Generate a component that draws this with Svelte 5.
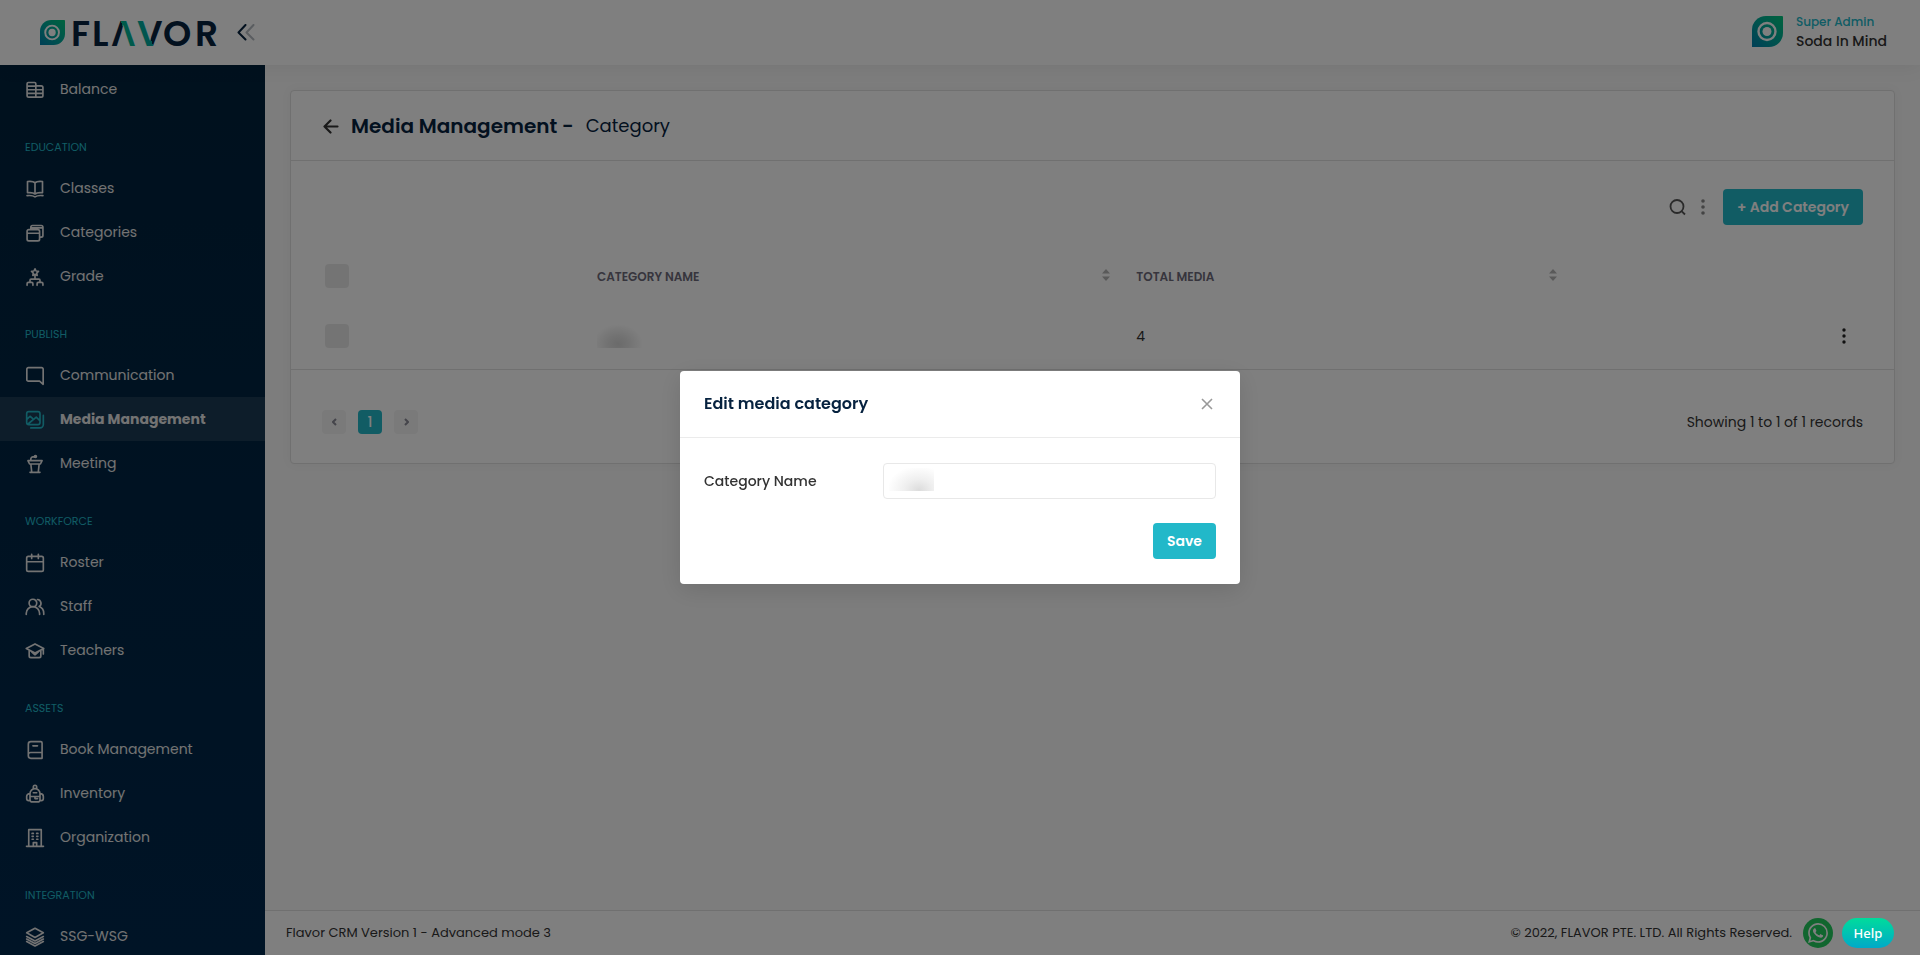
<script>
  const groups = [
    { label: '', items: [{ name: 'Balance', icon: 'balance' }] },
    {
      label: 'EDUCATION',
      items: [
        { name: 'Classes', icon: 'classes' },
        { name: 'Categories', icon: 'categories' },
        { name: 'Grade', icon: 'grade' }
      ]
    },
    {
      label: 'PUBLISH',
      items: [
        { name: 'Communication', icon: 'chat' },
        { name: 'Media Management', icon: 'media', active: true },
        { name: 'Meeting', icon: 'meeting' }
      ]
    },
    {
      label: 'WORKFORCE',
      items: [
        { name: 'Roster', icon: 'roster' },
        { name: 'Staff', icon: 'staff' },
        { name: 'Teachers', icon: 'teachers' }
      ]
    },
    {
      label: 'ASSETS',
      items: [
        { name: 'Book Management', icon: 'book' },
        { name: 'Inventory', icon: 'inventory' },
        { name: 'Organization', icon: 'organization' }
      ]
    },
    { label: 'INTEGRATION', items: [{ name: 'SSG-WSG', icon: 'layers' }] }
  ];

  // Outline icons on a 24-unit grid
  const icons = {
    balance:
      'M13 20.5H4.500a2 2 0 0 1-2-2V4.500a1.500 1.500 0 0 1 1.500-1.500h7.500a1.500 1.500 0 0 1 1.500 1.500V20.500zM13 7h6.500a2 2 0 0 1 2 2v9.500a2 2 0 0 1-2 2H13M2.500 7.300H13M2.500 11.700h19M2.500 16.100h19',
    classes:
      'M12 4.500C10 2.800 6.500 2.600 3 3v13.500c3.500-.4 7-.2 9 1.500 2-1.700 5.500-1.900 9-1.500V3c-3.500-.4-7-.2-9 1.500zM12 4.500v12.500M2.500 20c3.500-.4 7-.2 9.500 1.500 2.500-1.700 6-1.900 9.500-1.500',
    categories:
      'M4.500 8h11a2 2 0 0 1 2 2v9.500a2 2 0 0 1-2 2h-11a2 2 0 0 1-2-2V10a2 2 0 0 1 2-2zM2.500 12.300h15M7 7.500V5a2 2 0 0 1 2-2h10.500a2 2 0 0 1 2 2v10a2 2 0 0 1-2 2h-2M7 5.800h14.500',
    grade:
      'M12 2.200l1.300 2.600 2.900.4-2.100 2 .5 2.900-2.600-1.400-2.600 1.400.5-2.900-2.100-2 2.900-.4zM12 10v4.500M6 18.500v-2.700a1.300 1.300 0 0 1 1.300-1.300h9.400a1.300 1.300 0 0 1 1.300 1.300v2.700M2.500 22v-2a1.500 1.500 0 0 1 1.500-1.500h4A1.500 1.500 0 0 1 9.500 20v2M14.500 22v-2a1.500 1.500 0 0 1 1.500-1.500h4a1.500 1.500 0 0 1 1.500 1.500v2',
    chat: 'M4 2h16a1.800 1.800 0 0 1 1.800 1.800v18.200l-4.300-3.800H4a1.800 1.800 0 0 1-1.800-1.800V3.800A1.800 1.800 0 0 1 4 2z',
    media:
      'M4.500 2h11a2.500 2.500 0 0 1 2.500 2.500v10.500a2.500 2.500 0 0 1-2.500 2.500h-11A2.500 2.500 0 0 1 2 15V4.500A2.500 2.500 0 0 1 4.500 2zM2.500 11l3.500-3.500L9 10M4 16.500L13.500 8.500l4 4M22 6.500v11a4 4 0 0 1-4 4H7',
    meeting:
      'M3.500 8h17l-2 4h-13zM7 12l1 9M17 12l-1 9M6 22h12M7 8V6a2.500 2.500 0 0 1 2.500-2.500H12',
    roster:
      'M4 4h16a2 2 0 0 1 2 2v14a2 2 0 0 1-2 2H4a2 2 0 0 1-2-2V6a2 2 0 0 1 2-2zM2 10.500h20M8 1.500v5M16 1.500v5',
    staff:
      'M9.500 2.700a4.600 4.600 0 1 1 0 9.200 4.600 4.600 0 0 1 0-9.200zM1.500 21v-1.500a8 8 0 0 1 16 0V21M15 3a4.600 4.600 0 0 1 2 8.500c3.300 1.300 5.500 4.200 5.500 8V21',
    teachers:
      'M12 3.500l10.500 5.500-10.500 5.500L1.500 9zM5 11.500v6.500a2 2 0 0 0 2 2h10a2 2 0 0 0 2-2v-6.500M22 9.500v6M8 13l4 3.500 4-3.500',
    book: 'M7 2h12a1.500 1.500 0 0 1 1.500 1.500v18.500H7a3 3 0 0 1-3-3V5a3 3 0 0 1 3-3zM4 17a3 3 0 0 1 3-2h13.500M9.500 7h5.500',
    inventory:
      'M12 5.500a6 6 0 0 1 6 6V19a2.500 2.500 0 0 1-2.500 2.500h-7A2.500 2.500 0 0 1 6 19v-7.500a6 6 0 0 1 6-6zM10 5.500V3.500a2 2 0 0 1 4 0v2M6 11.500c-2.300 0-4 1.500-4 3.500v2.500A2.500 2.500 0 0 0 4.500 20H6M18 11.500c2.300 0 4 1.500 4 3.500v2.500a2.500 2.500 0 0 1-2.500 2.500H18M10 10.500h4M6.500 15h11M12 15v2.500h3',
    organization:
      'M4.500 22V2h15v20M1.800 22h20.400M10 22v-4.500h4v4.500M8.500 6.500h1.500M14 6.500h1.500M8.500 10h1.500M14 10h1.500M8.500 13.500h1.500M14 13.500h1.500',
    layers:
      'M12 1.500l10 5.500-10 5.500-10-5.500zM2 11.400l10 5.300 10-5.300M2 14.400l10 5.300 10-5.300M2 17.400l10 5.300 10-5.300'
  };

  let open = $state(true);
  let name = $state('');
</script>

{#snippet mark(id)}
  <svg class="mark" viewBox="0 0 31 31" aria-hidden="true">
    <defs>
      <linearGradient {id} x1="0" y1="1" x2="1" y2="0">
        <stop offset="0" stop-color="#007fae" />
        <stop offset="0.5" stop-color="#00a89b" />
        <stop offset="1" stop-color="#00c77c" />
      </linearGradient>
    </defs>
    <path d="M0 31V14A14 14 0 0 1 14 0H30a1 1 0 0 1 1 1V17A14 14 0 0 1 17 31z" fill="url(#{id})" />
    <circle cx="15" cy="15.500" r="8.500" fill="none" stroke="#fff" stroke-width="2.400" />
    <circle cx="15" cy="15.500" r="4.500" fill="#fff" />
  </svg>
{/snippet}

<div class="page">
  <header class="topbar">
    <a class="brand" href="#home" aria-label="Flavor">
      {@render mark('brandMark')}
      <svg class="wordmark" viewBox="0 0 150 60" aria-hidden="true">
        <defs>
          <linearGradient id="lambda" gradientUnits="userSpaceOnUse" x1="50" y1="18" x2="75" y2="11">
            <stop offset="0" stop-color="#06223f" />
            <stop offset="0" stop-color="#00b894" />
            <stop offset="1" stop-color="#009fa8" />
          </linearGradient>
          <linearGradient id="vee" gradientUnits="userSpaceOnUse" x1="50" y1="25" x2="75" y2="18">
            <stop offset="0" stop-color="#00b894" />
            <stop offset="1" stop-color="#00a8a0" />
            <stop offset="1" stop-color="#06223f" />
          </linearGradient>
        </defs>
        <text x="0" y="43">F</text>
        <text x="21" y="43">L</text>
        <text class="greek" x="40" y="43" fill="url(#lambda)">Λ</text>
        <text x="66" y="43" fill="url(#vee)">V</text>
        <text x="92" y="43">O</text>
        <text x="124" y="43">R</text>
      </svg>
    </a>
    <button class="plain collapse" aria-label="Collapse menu">
      <svg width="18" height="17" viewBox="0 0 18 17" fill="none" stroke-width="2" stroke-linecap="round" stroke-linejoin="round">
        <path d="M8.500 1L1.500 8.500l7 7" stroke="#06223f" />
        <path d="M16.500 1L9.500 8.500l7 7" stroke="#b4bac0" />
      </svg>
    </button>
    <div class="user">
      {@render mark('userMark')}
      <div>
        <div class="role">Super Admin</div>
        <div class="who">Soda In Mind</div>
      </div>
    </div>
  </header>

  <div class="body">
    <nav class="sidebar">
      {#each groups as group}
        {#if group.label}<h2>{group.label}</h2>{/if}
        {#each group.items as item}
          <a href="#{item.icon}" class:active={item.active}>
            <svg width="20" height="20" viewBox="0 0 24 24" aria-hidden="true"><path d={icons[item.icon]} />
              {#if item.icon === 'meeting'}<circle cx="12.500" cy="3" r="1.200" />{/if}
            </svg>
            <span>{item.name}</span>
          </a>
        {/each}
      {/each}
    </nav>

    <div class="content">
      <main>
        <section class="card">
          <div class="card-head">
            <button class="plain" aria-label="Back">
              <svg width="16" height="16" viewBox="0 0 16 16" fill="none" stroke="#333" stroke-width="2.200" stroke-linecap="round" stroke-linejoin="round"><path d="M14.500 8.500H1.500M7.500 2.500l-6 6 6 6" /></svg>
            </button>
            <h1>Media Management -</h1>
            <span class="crumb">Category</span>
          </div>
          <div class="card-body">
            <div class="toolbar">
              <div class="tools">
                <button class="plain" aria-label="Search">
                  <svg width="17" height="17" viewBox="0 0 17 17" fill="none" stroke="#555" stroke-width="1.800"><circle cx="8" cy="7.500" r="6.500" /><path d="M12.800 12.300l3.200 3.200" /></svg>
                </button>
                <button class="plain" aria-label="More options">
                  <svg width="4" height="16" viewBox="0 0 4 16" fill="#888"><circle cx="2" cy="2" r="1.800" /><circle cx="2" cy="8" r="1.800" /><circle cx="2" cy="14" r="1.800" /></svg>
                </button>
              </div>
              <button class="primary">+ Add Category</button>
            </div>
            <table>
              <colgroup><col class="c1" /><col class="c2" /><col class="c3" /><col /></colgroup>
              <thead>
                <tr>
                  <th><input type="checkbox" aria-label="Select all" /></th>
                  {#each ['CATEGORY NAME', 'TOTAL MEDIA'] as head}
                    <th>
                      <div class="sortable">
                        <span>{head}</span>
                        <svg width="8" height="12" viewBox="0 0 8 12" fill="#b4b4b4" aria-hidden="true"><path d="M4 0l4 4.500H0zM4 12l4-4.500H0z" /></svg>
                      </div>
                    </th>
                  {/each}
                  <th></th>
                </tr>
              </thead>
              <tbody>
                <tr>
                  <td><input type="checkbox" aria-label="Select row" /></td>
                  <td><div class="smudge"></div></td>
                  <td>4</td>
                  <td>
                    <button class="plain row-menu" aria-label="Row actions">
                      <svg width="4" height="16" viewBox="0 0 4 16" fill="#222"><circle cx="2" cy="2" r="1.700" /><circle cx="2" cy="8" r="1.700" /><circle cx="2" cy="14" r="1.700" /></svg>
                    </button>
                  </td>
                </tr>
              </tbody>
            </table>
          </div>
          <div class="card-foot">
            <div class="pager">
              <button aria-label="Previous page"><svg width="5" height="8" viewBox="0 0 5 8"><path d="M4 1L1 4l3 3" /></svg></button>
              <button class="current">1</button>
              <button aria-label="Next page"><svg width="5" height="8" viewBox="0 0 5 8"><path d="M1 1l3 3-3 3" /></svg></button>
            </div>
            <span>Showing 1 to 1 of 1 records</span>
          </div>
        </section>
      </main>
      <footer>
        <span>Flavor CRM Version 1 - Advanced mode 3</span>
        <div class="legal">
          <span>© 2022, FLAVOR PTE. LTD. All Rights Reserved.</span>
          <a class="whatsapp" href="#whatsapp" aria-label="WhatsApp">
            <svg width="20" height="20" viewBox="0 0 24 24" fill="#fff" aria-hidden="true">
              <path d="M17.472 14.382c-.297-.149-1.758-.867-2.030-.967-.273-.099-.471-.148-.670.150-.197.297-.767.966-.940 1.164-.173.199-.347.223-.644.075-.297-.150-1.255-.463-2.390-1.475-.883-.788-1.480-1.761-1.653-2.059-.173-.297-.018-.458.130-.606.134-.133.298-.347.446-.520.149-.174.198-.298.298-.497.099-.198.050-.371-.025-.520-.075-.149-.669-1.612-.916-2.207-.242-.579-.487-.500-.669-.510-.173-.008-.371-.010-.570-.010-.198 0-.520.074-.792.372-.272.297-1.040 1.016-1.040 2.479 0 1.462 1.065 2.875 1.213 3.074.149.198 2.096 3.200 5.077 4.487.709.306 1.262.489 1.694.625.712.227 1.360.195 1.871.118.571-.085 1.758-.719 2.006-1.413.248-.694.248-1.289.173-1.413-.074-.124-.272-.198-.570-.347m-5.421 7.403h-.004a9.870 9.870 0 0 1-5.031-1.378l-.361-.214-3.741.982.998-3.648-.235-.374a9.860 9.860 0 0 1-1.510-5.260c.001-5.450 4.436-9.884 9.888-9.884 2.640 0 5.122 1.030 6.988 2.898a9.825 9.825 0 0 1 2.893 6.994c-.003 5.450-4.437 9.884-9.885 9.884m8.413-18.297A11.815 11.815 0 0 0 12.050 0C5.495 0 .160 5.335.157 11.892c0 2.096.547 4.142 1.588 5.945L.057 24l6.305-1.654a11.882 11.882 0 0 0 5.683 1.448h.005c6.554 0 11.890-5.335 11.893-11.893a11.821 11.821 0 0 0-3.480-8.413z" />
            </svg>
          </a>
        </div>
      </footer>
    </div>
  </div>
</div>

{#if open}
  <div class="overlay">
    <div class="modal" role="dialog" aria-modal="true" aria-labelledby="modal-title">
      <div class="modal-head">
        <h2 id="modal-title">Edit media category</h2>
        <button class="plain" aria-label="Close" onclick={() => (open = false)}>
          <svg width="18" height="12" viewBox="0 0 18 12" fill="none" stroke="#999" stroke-width="1.600"><path d="M4 1l10 10M14 1L4 11" /></svg>
        </button>
      </div>
      <form onsubmit={(e) => e.preventDefault()}>
        <div class="field">
          <label for="category-name">Category Name</label>
          <input id="category-name" type="text" bind:value={name} />
        </div>
        <button class="primary" type="submit">Save</button>
      </form>
    </div>
  </div>
{/if}

<button class="help">Help</button>

<style>
  :global(body) {
    font-family: Poppins, Inter, 'Noto Sans', sans-serif;
    font-size: 14px;
    line-height: 20px;
    color: #333;
  }
  :global(*) {
    box-sizing: border-box;
  }
  button,
  input {
    font: inherit;
  }
  h1,
  h2 {
    margin: 0;
  }
  a {
    color: inherit;
    text-decoration: none;
  }
  svg {
    display: block;
    flex: none;
  }
  .plain {
    display: flex;
    padding: 0;
    border: 0;
    background: none;
  }
  .page {
    display: flex;
    flex-direction: column;
    height: 100vh;
    overflow: hidden;
  }
  .topbar {
    display: flex;
    align-items: center;
    height: 65px;
    flex: none;
    padding: 0 33px 0 40px;
    background: #fff;
    box-shadow: 0 0 20px rgba(0, 0, 0, 0.08);
    z-index: 1;
  }
  .brand {
    display: flex;
    align-items: center;
    gap: 6px;
  }
  .brand .mark {
    width: 25px;
    height: 25px;
  }
  .wordmark {
    width: 150px;
    height: 60px;
    font-weight: 600;
    font-size: 36px;
    fill: #06223f;
  }
  .greek {
    font-family: Inter, sans-serif;
    font-size: 34px;
  }
  .collapse {
    margin-left: 16px;
  }
  .user {
    display: flex;
    align-items: center;
    gap: 13px;
    margin-left: auto;
    padding-bottom: 2px;
  }
  .user .mark {
    width: 31px;
    height: 31px;
  }
  .role {
    font-size: 12px;
    line-height: 18px;
    color: #22b8c9;
    font-weight: 500;
  }
  .who {
    font-weight: 500;
    color: #333;
  }
  .body {
    display: flex;
    flex: 1;
    min-height: 0;
  }
  .sidebar {
    flex: none;
    width: 265px;
    padding-top: 2px;
    overflow: hidden;
    color: #e6e6e6;
    background: linear-gradient(#00223c, #00284d);
  }
  .sidebar h2 {
    padding: 26px 25px 9px;
    font-size: 11px;
    line-height: 20px;
    font-weight: 400;
    color: #22b8c9;
  }
  .sidebar a {
    display: flex;
    align-items: center;
    gap: 15px;
    height: 44px;
    padding: 0 25px;
  }
  .sidebar svg {
    margin-top: 2px;
    fill: none;
    stroke: currentColor;
    stroke-width: 2;
    stroke-linecap: round;
    stroke-linejoin: round;
  }
  .sidebar a.active {
    background: #1a3a54;
    font-weight: 700;
  }
  .active svg {
    color: #22b8c9;
  }
  .content {
    flex: 1;
    min-width: 0;
    display: flex;
    flex-direction: column;
    background: #fafafa;
  }
  main {
    flex: 1;
    padding: 25px;
  }
  .card {
    background: #fff;
    border: 1px solid #e0e0e0;
    border-radius: 4px;
    box-shadow: 0 0 12px rgba(0, 0, 0, 0.04);
  }
  .card-head {
    display: flex;
    align-items: center;
    gap: 12px;
    height: 70px;
    padding: 0 32px;
    border-bottom: 1px solid #e0e0e0;
    color: #06223f;
  }
  h1 {
    font-size: 20px;
    line-height: 30px;
    font-weight: 600;
  }
  .crumb {
    font-size: 18px;
    font-weight: 400;
  }
  .card-body {
    padding: 28px 31px 4px;
    border-bottom: 1px solid #e0e0e0;
  }
  .toolbar {
    display: flex;
    justify-content: flex-end;
    align-items: center;
    gap: 18px;
    padding-bottom: 21px;
  }
  .tools {
    display: flex;
    align-items: center;
    gap: 15px;
  }
  .primary {
    height: 36px;
    padding: 0 14px;
    border: 0;
    border-radius: 4px;
    background: #22b8c9;
    color: #fff;
    font-weight: 600;
  }
  table {
    width: 100%;
    table-layout: fixed;
    border-collapse: collapse;
  }
  .c1 {
    width: 17%;
  }
  .c2 {
    width: 35%;
  }
  .c3 {
    width: 29%;
  }
  th,
  td {
    padding: 0 13px;
    text-align: left;
  }
  th {
    height: 60px;
    font-size: 12px;
    font-weight: 600;
    color: #6e6b7b;
  }
  td {
    height: 59px;
    vertical-align: middle;
  }
  th:first-child,
  td:first-child {
    padding: 0 3px;
  }
  .sortable {
    display: flex;
    justify-content: space-between;
    align-items: center;
  }
  .sortable span {
    padding-top: 2px;
  }
  .sortable svg {
    margin-bottom: 2px;
  }
  input[type='checkbox'] {
    display: block;
    appearance: none;
    width: 24px;
    height: 24px;
    margin: 0;
    border-radius: 4px;
    background: #e9e9e9;
  }
  .smudge {
    width: 48px;
    height: 24px;
    background: radial-gradient(ellipse 25px 20px at 21px 20px, #d6d6d6, #e4e4e4 40%, #fff);
  }
  .row-menu {
    margin-left: auto;
    padding: 0 4px;
  }
  .card-foot {
    display: flex;
    justify-content: space-between;
    align-items: center;
    height: 93px;
    padding: 10px 31px 0;
  }
  .pager {
    display: flex;
    gap: 12px;
  }
  .pager button {
    display: flex;
    align-items: center;
    justify-content: center;
    width: 24px;
    height: 24px;
    padding: 0;
    border: 0;
    border-radius: 4px;
    background: #f4f4f4;
    font-weight: 500;
  }
  .pager .current {
    background: #22b8c9;
    color: #fff;
  }
  .pager svg {
    fill: none;
    stroke: #8a8a96;
    stroke-width: 2;
  }
  footer {
    display: flex;
    justify-content: space-between;
    align-items: center;
    height: 45px;
    padding: 0 87px 0 21px;
    border-top: 1px solid #e0e0e0;
    background: #fff;
    font-size: 13px;
  }
  .legal {
    display: flex;
    align-items: center;
    gap: 11px;
  }
  .whatsapp {
    display: flex;
    align-items: center;
    justify-content: center;
    width: 30px;
    height: 30px;
    border-radius: 50%;
    background: #22cc5e;
  }
  .overlay {
    position: fixed;
    inset: 0;
    z-index: 2;
    display: flex;
    align-items: center;
    justify-content: center;
    background: rgba(0, 0, 0, 0.5);
  }
  .modal {
    width: 560px;
    max-width: 100%;
    border-radius: 4px;
    background: #fff;
    box-shadow: 0 6px 24px rgba(0, 0, 0, 0.12);
  }
  .modal-head {
    display: flex;
    align-items: center;
    justify-content: space-between;
    height: 67px;
    padding: 0 24px;
    border-bottom: 1px solid #ebebeb;
  }
  .modal-head h2 {
    font-size: 16px;
    line-height: 24px;
    font-weight: 600;
    color: #06223f;
  }
  form {
    display: flex;
    flex-direction: column;
    align-items: flex-end;
    gap: 24px;
    padding: 25px 24px;
  }
  .field {
    display: grid;
    grid-template-columns: 35% 65%;
    align-items: center;
    width: 100%;
    font-weight: 500;
  }
  .field input {
    width: 100%;
    height: 36px;
    padding: 0 12px;
    border: 1px solid #e8e8e8;
    border-radius: 4px;
    background: radial-gradient(ellipse 32px 24px at 30px 22px, #dcdcdc, #efefef 45%, #fff) 5px 4px / 45px 23px no-repeat #fff;
  }
  .help {
    position: fixed;
    right: 26px;
    bottom: 7px;
    z-index: 3;
    width: 52px;
    height: 30px;
    padding: 0;
    border: 0;
    border-radius: 15px;
    background: linear-gradient(#00dc9c, #00a9c8);
    color: #fff;
    font-family: 'Noto Sans', sans-serif;
    font-size: 13px;
    font-weight: 500;
  }
</style>
